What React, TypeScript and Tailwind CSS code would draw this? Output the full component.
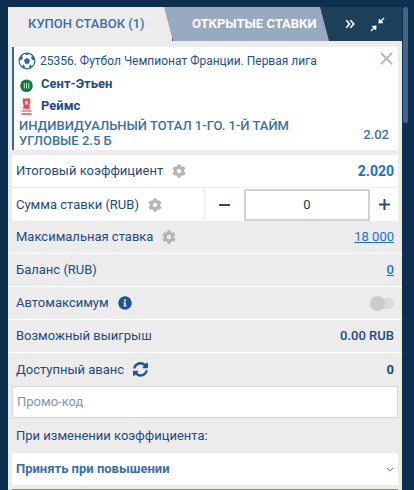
import React from "react";

const font = { fontFamily: "Roboto, 'Liberation Sans', sans-serif" };

function Gear({ className = "" }: { className?: string }) {
  return (
    <svg viewBox="0 0 512 512" className={`w-[14px] h-[14px] ${className}`} fill="#b5b5b5">
      <path d="M487 316l-42-25a190 190 0 0 0 0-70l42-25c5-3 7-9 6-14a248 248 0 0 0-55-95c-4-4-10-5-15-2l-42 24a190 190 0 0 0-61-35V26c0-6-4-11-9-12a250 250 0 0 0-110 0c-5 1-9 6-9 12v48a190 190 0 0 0-61 35L89 85c-5-3-11-2-15 2a248 248 0 0 0-55 95c-1 5 1 11 6 14l42 25a190 190 0 0 0 0 70l-42 25c-5 3-7 9-6 14a248 248 0 0 0 55 95c4 4 10 5 15 2l42-24a190 190 0 0 0 61 35v48c0 6 4 11 9 12a250 250 0 0 0 110 0c5-1 9-6 9-12v-48a190 190 0 0 0 61-35l42 24c5 3 11 2 15-2a248 248 0 0 0 55-95c1-5-1-11-6-14zM256 336a80 80 0 1 1 0-160 80 80 0 0 1 0 160z" />
    </svg>
  );
}

function Row({ children, border = true }: { children: React.ReactNode; border?: boolean }) {
  return (
    <div className={`h-[33px] pl-[8px] pr-[8px] flex items-center justify-between text-[13px] text-[#234a80] ${border ? "border-b border-white" : ""}`}>
      {children}
    </div>
  );
}

export default function App() {
  return (
    <div style={font} className="w-[414px] h-[490px] bg-[#0d3050] overflow-hidden relative">
      <div className="absolute right-[6px] top-[7px] w-[5px] h-[116px] rounded-[3px] bg-[#466583]" />
      <div className="ml-[8px] pt-[7px] w-[394px]">
        {/* tabs */}
        <div className="flex h-[34px] bg-[#1c3f5a] relative">
          <div className="w-[164px] bg-[#ececec] flex items-center pl-[20px] text-[13px] font-medium text-[#3b6ea5] [clip-path:polygon(0_0,100%_0,100%_100%,0_100%)] z-10 relative">
            КУПОН СТАВОК (1)
          </div>
          <div className="w-[165px] -ml-[8px] bg-[#99a9c0] flex items-center pl-[28px] text-[13px] font-bold text-white [clip-path:polygon(0_0,calc(100%-9px)_0,100%_100%,9px_100%)] z-20">
            ОТКРЫТЫЕ СТАВКИ
          </div>
          <div className="flex-1 flex items-center pl-[16px] gap-[15px] z-20">
            <svg viewBox="0 0 12 12" className="w-[10px] h-[10px]" fill="none" stroke="#fff" strokeWidth="2">
              <path d="M1.5 1.5 5.5 6l-4 4.5M6.5 1.5 10.5 6l-4 4.5" />
            </svg>
            <svg viewBox="0 0 16 16" className="w-[15px] h-[15px]" fill="#fff">
              <path d="M15.5 1.5 14.5.5 11.5 3.5 9.5 1.5 9 7 14.5 6.5 12.5 4.5zM.5 14.5l1 1 3-3 2 2L7 9l-5.500.500 2 2z" />
            </svg>
          </div>
        </div>

        <div className="bg-[#ececec]">
          {/* coupon */}
          <div className="pt-[6px] pl-[4px] pr-[4px]">
            <div className="h-[103px] bg-white border-l-2 border-[#2f6ca6] relative pl-[5px] pr-[8px]">
              <div className="flex items-center h-[26px] pt-[2px] gap-[4px]">
                <svg viewBox="0 0 20 20" className="w-[18px] h-[18px] shrink-0 -ml-[1px]">
                  <circle cx="10" cy="10" r="8.700" fill="#fff" stroke="#2c6aa5" strokeWidth="1.400" />
                  <path d="M10 6.500 13.400 9 12.100 13H7.900L6.600 9z" fill="#2c6aa5" />
                  <path d="M6.500 1.800 10 3.500l3.500-1.700L10 1zM1.500 8.500l3 .5 1-3.500L3 4zM18.500 8.500l-3 .5-1-3.500L17 4zM4.500 16l1.500-2.500 2 3-1.500 1.500zM15.500 16 14 13.500l-2 3 1.500 1.500z" fill="#2c6aa5" />
                </svg>
                <span className="text-[12px] text-[#24508a] whitespace-nowrap">25356. Футбол Чемпионат Франции. Первая лига</span>
              </div>
              <div className="flex items-center h-[22px] gap-[7px]">
                <svg viewBox="0 0 16 20" className="w-[15px] h-[18px] shrink-0">
                  <path d="M8 0.500 9.500 2.500 6.500 2.500z" fill="#d9c7c7" />
                  <circle cx="8" cy="12" r="7" fill="#0f7a3d" />
                  <path d="M5 9h1v6H5zM7.500 9h1v6h-1zM10 9h1v6h-1z" fill="#d8ecd8" />
                </svg>
                <span className="text-[13px] font-bold text-[#234a80]">Сент-Этьен</span>
              </div>
              <div className="flex items-center h-[22px] gap-[7px]">
                <svg viewBox="0 0 16 20" className="w-[15px] h-[19px] shrink-0">
                  <path d="M4 1.500h8v4l-1 4 1 3H4l1-3-1-4z" fill="#e5484d" />
                  <path d="M6.500 4h3v4h-3z" fill="#fbdcdc" />
                  <path d="M2.500 14h11v1.500h-11zM2.500 17h11v2h-11z" fill="#e8777a" />
                </svg>
                <span className="text-[13px] font-bold text-[#234a80]">Реймс</span>
              </div>
              <div className="text-[13px] leading-[15px] font-medium text-[#3a70a8] mt-[1px]">
                <div className="whitespace-nowrap">ИНДИВИДУАЛЬНЫЙ ТОТАЛ 1-ГО. 1-Й ТАЙМ</div>
                <div>УГЛОВЫЕ 2.5 Б</div>
              </div>
              <span className="absolute right-[9px] top-[78px] text-[13px] font-medium text-[#3a70a8]">2.02</span>
              <svg viewBox="0 0 14 14" className="absolute right-[5px] top-[5px] w-[13px] h-[13px]" fill="none" stroke="#a4b3c8" strokeWidth="1.700">
                <path d="M1 1l12 12M13 1 1 13" />
              </svg>
            </div>
          </div>

          {/* white rows */}
          <div className="mt-[5px] ml-[4px] mr-[4px] bg-white">
            <div className="h-[33px] pl-[4px] pr-[4px] flex items-center justify-between border-b border-[#ececec] text-[13px] text-[#234a80]">
              <div className="flex items-center gap-[9px]">
                <span>Итоговый коэффициент</span>
                <Gear />
              </div>
              <span className="text-[14px] font-bold text-[#1a6fc9]">2.020</span>
            </div>
            <div className="h-[33px] flex items-center text-[13px] text-[#234a80]">
              <div className="w-[193px] h-full pl-[4px] flex items-center gap-[9px] border-r border-[#ececec]">
                <span>Сумма ставки (RUB)</span>
                <Gear />
              </div>
              <div className="w-[39px] flex justify-center pr-[1px]">
                <div className="w-[11px] h-[2px] bg-[#234e85]" />
              </div>
              <div className="w-[126px] h-[32px] border-[2px] border-[#d2d2d2] flex items-center justify-center text-[13px] text-[#333] bg-white">0</div>
              <div className="flex-1 flex justify-center">
                <svg viewBox="0 0 11 11" className="w-[11px] h-[11px]" fill="#234e85">
                  <path d="M4.500 0h2v4.500H11v2H6.500V11h-2V6.500H0v-2h4.500z" />
                </svg>
              </div>
            </div>
          </div>

          {/* gray rows */}
          <Row>
            <div className="flex items-center gap-[9px]">
              <span>Максимальная ставка</span>
              <Gear />
            </div>
            <span className="text-[13px] text-[#1a6fc9] underline">18 000</span>
          </Row>
          <Row>
            <span>Баланс (RUB)</span>
            <span className="font-medium text-[#1a6fc9] underline">0</span>
          </Row>
          <Row>
            <div className="flex items-center gap-[9px]">
              <span>Автомаксимум</span>
              <svg viewBox="0 0 512 512" className="w-[14px] h-[14px]" fill="#1f5596">
                <path d="M256 8a248 248 0 1 0 0 496 248 248 0 0 0 0-496zm0 110a42 42 0 1 1 0 84 42 42 0 0 1 0-84zm56 254c0 7-5 12-12 12h-88c-7 0-12-5-12-12v-24c0-7 5-12 12-12h12v-64h-12c-7 0-12-5-12-12v-24c0-7 5-12 12-12h64c7 0 12 5 12 12v100h12c7 0 12 5 12 12z" />
              </svg>
            </div>
            <div className="relative w-[24px] h-[11px] rounded-full bg-[#dcdcdc]">
              <div className="absolute left-0 top-[-2px] w-[15px] h-[15px] rounded-full bg-[#cccccc]" />
            </div>
          </Row>
          <Row>
            <span>Возможный выигрыш</span>
            <span className="font-medium">0.00 RUB</span>
          </Row>
          <div className="h-[33px] pl-[8px] pr-[8px] flex items-center justify-between text-[13px] text-[#234a80]">
            <div className="flex items-center gap-[9px]">
              <span>Доступный аванс</span>
              <svg viewBox="0 0 512 512" className="w-[15px] h-[15px]" fill="#1f5596">
                <path d="M370.700 133.300A168 168 0 0 0 89.800 208c-1 6-6 10-12 10H20c-8 0-14-7-12-15C29 87 132 0 256 0c68 0 130 27 176 70l36-36c15-15 44-4 44 17v135c0 13-11 24-24 24H353c-21 0-32-26-17-41zM24 296h135c21 0 32 26 17 41l-34 33a168 168 0 0 0 280-75c1-6 6-10 12-10h58c8 0 14 7 12 15-21 116-124 200-248 200-68 0-130-27-176-70l-36 36c-15 15-44 4-44-17V320c0-13 11-24 24-24z" />
              </svg>
            </div>
            <span className="font-bold">0</span>
          </div>

          {/* promo */}
          <div className="mx-[4px] h-[32px] bg-white border border-[#d6d6d6] flex items-center pl-[4px] text-[13px] text-[#7d96b5]">
            Промо-код
          </div>
          <div className="h-[35px] pl-[8px] flex items-center text-[13px] text-[#234a80]">При изменении коэффициента:</div>
          <div className="mx-[4px] h-[32px] bg-white flex items-center justify-between pl-[4px] pr-[4px] text-[13px] font-bold text-[#3a70a8]">
            <span>Принять при повышении</span>
            <svg viewBox="0 0 10 6" className="w-[8px] h-[5px]" fill="none" stroke="#4a6285" strokeWidth="1.100">
              <path d="M1 1l4 4 4-4" />
            </svg>
          </div>
          <div className="h-[4px]" />
          <div className="mx-[4px] h-[2px] bg-[#7f9e45]" />
        </div>
      </div>
    </div>
  );
}
